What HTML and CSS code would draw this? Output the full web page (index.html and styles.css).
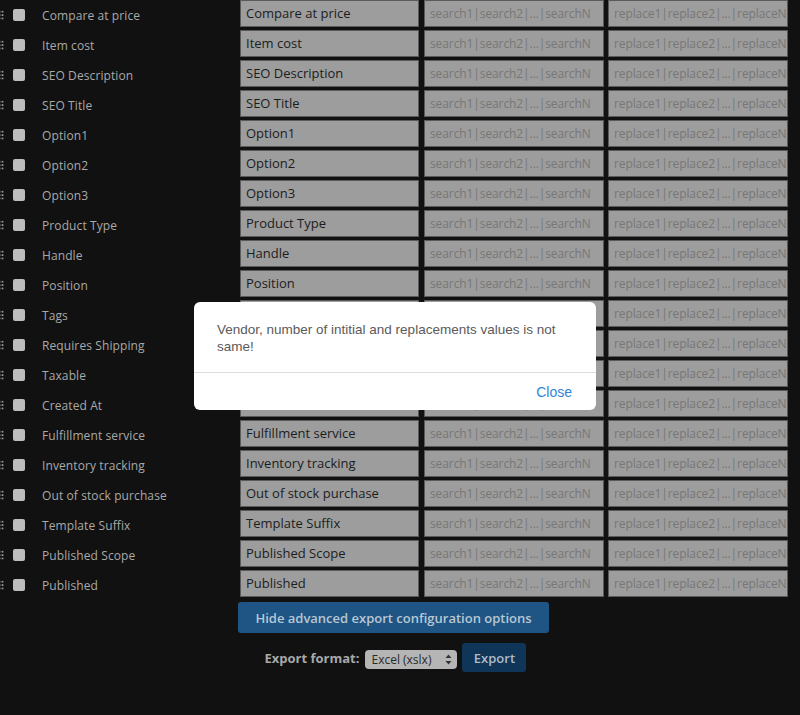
FILE: index.html
```html
<!DOCTYPE html>
<html>
<head>
<meta charset="utf-8">
<link rel="stylesheet" href="styles.css">
</head>
<body>
<div class="page">
  <div class="fields">
    <div class="row"><div class="left"><span class="handle"></span><span class="check"></span><span class="lbl">Compare at price</span></div><div class="box name">Compare at price</div><div class="box ph s">search1|search2|...|searchN</div><div class="box ph r">replace1|replace2|...|replaceN</div></div>
    <div class="row"><div class="left"><span class="handle"></span><span class="check"></span><span class="lbl">Item cost</span></div><div class="box name">Item cost</div><div class="box ph s">search1|search2|...|searchN</div><div class="box ph r">replace1|replace2|...|replaceN</div></div>
    <div class="row"><div class="left"><span class="handle"></span><span class="check"></span><span class="lbl">SEO Description</span></div><div class="box name">SEO Description</div><div class="box ph s">search1|search2|...|searchN</div><div class="box ph r">replace1|replace2|...|replaceN</div></div>
    <div class="row"><div class="left"><span class="handle"></span><span class="check"></span><span class="lbl">SEO Title</span></div><div class="box name">SEO Title</div><div class="box ph s">search1|search2|...|searchN</div><div class="box ph r">replace1|replace2|...|replaceN</div></div>
    <div class="row"><div class="left"><span class="handle"></span><span class="check"></span><span class="lbl">Option1</span></div><div class="box name">Option1</div><div class="box ph s">search1|search2|...|searchN</div><div class="box ph r">replace1|replace2|...|replaceN</div></div>
    <div class="row"><div class="left"><span class="handle"></span><span class="check"></span><span class="lbl">Option2</span></div><div class="box name">Option2</div><div class="box ph s">search1|search2|...|searchN</div><div class="box ph r">replace1|replace2|...|replaceN</div></div>
    <div class="row"><div class="left"><span class="handle"></span><span class="check"></span><span class="lbl">Option3</span></div><div class="box name">Option3</div><div class="box ph s">search1|search2|...|searchN</div><div class="box ph r">replace1|replace2|...|replaceN</div></div>
    <div class="row"><div class="left"><span class="handle"></span><span class="check"></span><span class="lbl">Product Type</span></div><div class="box name">Product Type</div><div class="box ph s">search1|search2|...|searchN</div><div class="box ph r">replace1|replace2|...|replaceN</div></div>
    <div class="row"><div class="left"><span class="handle"></span><span class="check"></span><span class="lbl">Handle</span></div><div class="box name">Handle</div><div class="box ph s">search1|search2|...|searchN</div><div class="box ph r">replace1|replace2|...|replaceN</div></div>
    <div class="row"><div class="left"><span class="handle"></span><span class="check"></span><span class="lbl">Position</span></div><div class="box name">Position</div><div class="box ph s">search1|search2|...|searchN</div><div class="box ph r">replace1|replace2|...|replaceN</div></div>
    <div class="row"><div class="left"><span class="handle"></span><span class="check"></span><span class="lbl">Tags</span></div><div class="box name">Tags</div><div class="box ph s">search1|search2|...|searchN</div><div class="box ph r">replace1|replace2|...|replaceN</div></div>
    <div class="row"><div class="left"><span class="handle"></span><span class="check"></span><span class="lbl">Requires Shipping</span></div><div class="box name">Requires Shipping</div><div class="box ph s">search1|search2|...|searchN</div><div class="box ph r">replace1|replace2|...|replaceN</div></div>
    <div class="row"><div class="left"><span class="handle"></span><span class="check"></span><span class="lbl">Taxable</span></div><div class="box name">Taxable</div><div class="box ph s">search1|search2|...|searchN</div><div class="box ph r">replace1|replace2|...|replaceN</div></div>
    <div class="row"><div class="left"><span class="handle"></span><span class="check"></span><span class="lbl">Created At</span></div><div class="box name">Created At</div><div class="box ph s">search1|search2|...|searchN</div><div class="box ph r">replace1|replace2|...|replaceN</div></div>
    <div class="row"><div class="left"><span class="handle"></span><span class="check"></span><span class="lbl">Fulfillment service</span></div><div class="box name">Fulfillment service</div><div class="box ph s">search1|search2|...|searchN</div><div class="box ph r">replace1|replace2|...|replaceN</div></div>
    <div class="row"><div class="left"><span class="handle"></span><span class="check"></span><span class="lbl">Inventory tracking</span></div><div class="box name">Inventory tracking</div><div class="box ph s">search1|search2|...|searchN</div><div class="box ph r">replace1|replace2|...|replaceN</div></div>
    <div class="row"><div class="left"><span class="handle"></span><span class="check"></span><span class="lbl">Out of stock purchase</span></div><div class="box name">Out of stock purchase</div><div class="box ph s">search1|search2|...|searchN</div><div class="box ph r">replace1|replace2|...|replaceN</div></div>
    <div class="row"><div class="left"><span class="handle"></span><span class="check"></span><span class="lbl">Template Suffix</span></div><div class="box name">Template Suffix</div><div class="box ph s">search1|search2|...|searchN</div><div class="box ph r">replace1|replace2|...|replaceN</div></div>
    <div class="row"><div class="left"><span class="handle"></span><span class="check"></span><span class="lbl">Published Scope</span></div><div class="box name">Published Scope</div><div class="box ph s">search1|search2|...|searchN</div><div class="box ph r">replace1|replace2|...|replaceN</div></div>
    <div class="row"><div class="left"><span class="handle"></span><span class="check"></span><span class="lbl">Published</span></div><div class="box name">Published</div><div class="box ph s">search1|search2|...|searchN</div><div class="box ph r">replace1|replace2|...|replaceN</div></div>
  </div>
  <div class="actions">
    <button class="hide-btn">Hide advanced export configuration options</button>
    <div class="export-row">
      <span class="fmt-label">Export format:</span>
      <span class="select">Excel (xslx)<svg class="arrows" width="7" height="11" viewBox="0 0 7 11"><path d="M3.5 0.5 L6.5 4 L0.5 4 Z M3.5 10.5 L6.5 7 L0.5 7 Z" fill="#333"/></svg></span>
      <button class="export-btn">Export</button>
    </div>
  </div>
</div>

<div class="modal">
  <div class="modal-body">Vendor, number of intitial and replacements values is not same!</div>
  <div class="modal-foot"><span class="close">Close</span></div>
</div>
</body>
</html>
```

FILE: styles.css
```css
html, body {
  margin: 0;
  padding: 0;
  background: #111111;
  width: 800px;
  height: 715px;
  overflow: hidden;
}
body {
  font-family: "Open Sans", "Liberation Sans", sans-serif;
}
.page {
  position: relative;
}
.fields {
  display: flex;
  flex-direction: column;
}
.row {
  display: flex;
  align-items: flex-start;
  height: 30px;
}
.left {
  width: 240px;
  height: 27px;
  display: flex;
  align-items: center;
  padding-top: 3px;
  box-sizing: border-box;
}
.handle {
  width: 6px;
  height: 10px;
  margin-left: -2px;
  background-image: radial-gradient(circle, #9a9a9a 0.9px, transparent 1.2px);
  background-size: 3px 3.4px;
}
.check {
  width: 12px;
  height: 12px;
  border-radius: 2px;
  background: #bdbdbd;
  margin-left: 9px;
}
.lbl {
  margin-left: 17px;
  color: #a9a9a9;
  font-size: 12px;
  font-weight: 500;
  letter-spacing: 0.1px;
  white-space: nowrap;
}
.box {
  height: 27px;
  box-sizing: border-box;
  border: 1.5px solid #5a5a5a;
  background: #9d9d9d;
  display: flex;
  align-items: center;
  white-space: nowrap;
  overflow: hidden;
  font-size: 13px;
  padding-bottom: 1px;
}
.name {
  width: 179px;
  padding-left: 5px;
  color: #1c1c1c;
  font-weight: 500;
}
.ph {
  color: #777777;
  padding-left: 5px;
  font-weight: 500;
  font-size: 12px;
  letter-spacing: -0.1px;
}
.s {
  width: 180px;
  margin-left: 5px;
}
.r {
  width: 180px;
  margin-left: 4px;
}
.actions {
  margin-left: 238px;
  margin-top: 2px;
  display: inline-flex;
  flex-direction: column;
  align-items: center;
}
.hide-btn {
  font-family: "Open Sans", "Liberation Sans", sans-serif;
  font-size: 13px;
  font-weight: 600;
  color: #b9c7d2;
  background: #1e5585;
  border: none;
  border-radius: 3px;
  height: 31px;
  width: 311px;
  padding: 0;
}
.export-row {
  display: flex;
  align-items: center;
  margin-top: 10px;
  margin-left: 4px;
}
.fmt-label {
  color: #a8a8a8;
  font-weight: 700;
  font-size: 13px;
  margin-right: 6px;
}
.select {
  display: inline-flex;
  align-items: center;
  justify-content: space-between;
  width: 92px;
  height: 19px;
  box-sizing: border-box;
  padding: 0 5px 0 6px;
  background: #b5b5b5;
  border-radius: 4px;
  color: #2a2a2a;
  font-size: 12px;
  margin-top: 4px;
}
.arrows {
  display: block;
}
.export-btn {
  font-family: "Open Sans", "Liberation Sans", sans-serif;
  margin-left: 5px;
  width: 64px;
  height: 29px;
  border: none;
  border-radius: 3px;
  background: #0f3558;
  color: #aebbc8;
  font-size: 13px;
  font-weight: 600;
  padding: 0;
}
.modal {
  position: absolute;
  left: 194px;
  top: 302px;
  width: 402px;
  height: 108px;
  background: #ffffff;
  border-radius: 6px;
  font-family: "Liberation Sans", Arial, sans-serif;
  display: flex;
  flex-direction: column;
}
.modal-body {
  padding: 19px 23px 0 23px;
  height: 71px;
  box-sizing: border-box;
  color: #5a5a5a;
  font-size: 13.5px;
  line-height: 17px;
  border-bottom: 1px solid #dddddd;
}
.modal-foot {
  display: flex;
  justify-content: flex-end;
  align-items: center;
  flex: 1;
  padding-right: 24px;
}
.close {
  color: #2f86d8;
  font-size: 14px;
}
```
